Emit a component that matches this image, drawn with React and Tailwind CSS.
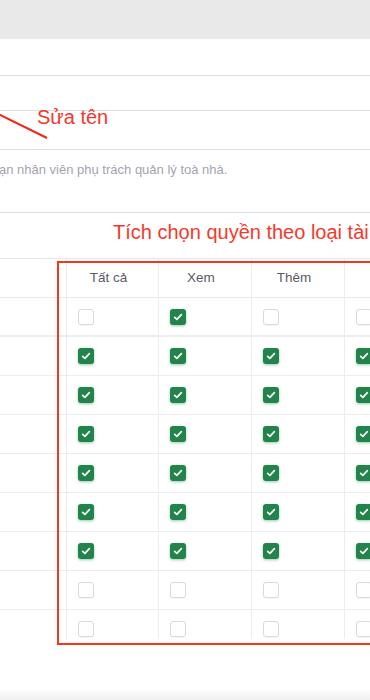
import React from 'react';

const rows = [
  [false, true, false, false],
  [true, true, true, true],
  [true, true, true, true],
  [true, true, true, true],
  [true, true, true, true],
  [true, true, true, true],
  [true, true, true, true],
  [false, false, false, false],
  [false, false, false, false],
];

const headers = ['Tất cả', 'Xem', 'Thêm', 'Sửa'];

const Box = ({ checked }) =>
  checked ? (
    <span className="flex w-4 h-4 items-center justify-center rounded-[3px] bg-[#23844b] shadow-[0_1px_3px_rgba(35,132,75,0.45)]">
      <svg viewBox="0 0 16 16" className="w-3 h-3" fill="none" stroke="white" strokeWidth="2.2" strokeLinecap="round" strokeLinejoin="round">
        <polyline points="3.5,8.5 6.5,11.2 12.5,4.8" />
      </svg>
    </span>
  ) : (
    <span className="block w-4 h-4 rounded-[3px] border border-[#d9d9e0] bg-white shadow-[0_1px_1px_rgba(0,0,0,0.04)]" />
  );

const Row = ({ children, className = '' }) => (
  <div className={`grid grid-cols-[66px_92px_93px_93px_93px] w-[437px] ${className}`}>{children}</div>
);

const App = () => {
  return (
    <div className="relative h-[700px] w-[370px] overflow-hidden bg-white flex flex-col font-['Liberation_Sans',Arial,sans-serif]">
      <div className="h-[39px] bg-[#e9e9e9] shrink-0" />
      <div className="h-[37px] border-b border-[#dedee6] shrink-0" />
      <div className="h-[35px] border-b border-[#dedee6] shrink-0" />
      <div className="relative h-[39px] border-b border-[#dedee6] shrink-0">
        <svg className="absolute left-0 top-[2px]" width="50" height="30" viewBox="0 0 50 30">
          <line x1="-2" y1="1" x2="47" y2="25" stroke="#f2261b" strokeWidth="2" />
        </svg>
        <span className="absolute left-[37px] top-[-6px] text-[20px] leading-6 text-[#f4392b]">Sửa tên</span>
      </div>
      <div className="h-[63px] border-b border-[#dedee6] shrink-0 pt-[12px]">
        <p className="text-[13px] leading-4 text-[#a3a3b0] ml-[-1px]">ạn nhân viên phụ trách quản lý toà nhà.</p>
      </div>
      <div className="h-[45px] shrink-0 pt-[5px] pl-[113px] whitespace-nowrap">
        <span className="text-[20px] leading-7 text-[#f4392b]">Tích chọn quyền theo loại tài sản</span>
      </div>
      <div className="h-[381px] shrink-0 overflow-hidden border-t border-[#e6e6ee]">
        <Row className="h-[39px] border-b border-[#e8e8ef]">
          <div />
          {headers.map(h => (
            <div key={h} className="flex items-center justify-center pr-2 border-l border-[#ececf2] text-[13.5px] text-[#5a5a66]">{h}</div>
          ))}
        </Row>
        {rows.map((r, i) => (
          <Row key={i} className={`h-[39px] ${i === 0 ? 'border-b-2' : 'border-b'} border-[#ececf2]`}>
            <div />
            {r.map((c, j) => (
              <div key={j} className="flex items-center pl-[11px] border-l border-[#ececf2]">
                <Box checked={c} />
              </div>
            ))}
          </Row>
        ))}
      </div>
      <div className="flex-1" />
      <div className="h-[12px] shrink-0 bg-gradient-to-b from-white to-[#f1f1f1]" />
      <div className="absolute left-[57px] top-[261px] w-[340px] h-[384px] border-2 border-[#f4361f]" />
    </div>
  );
};

export default App;
